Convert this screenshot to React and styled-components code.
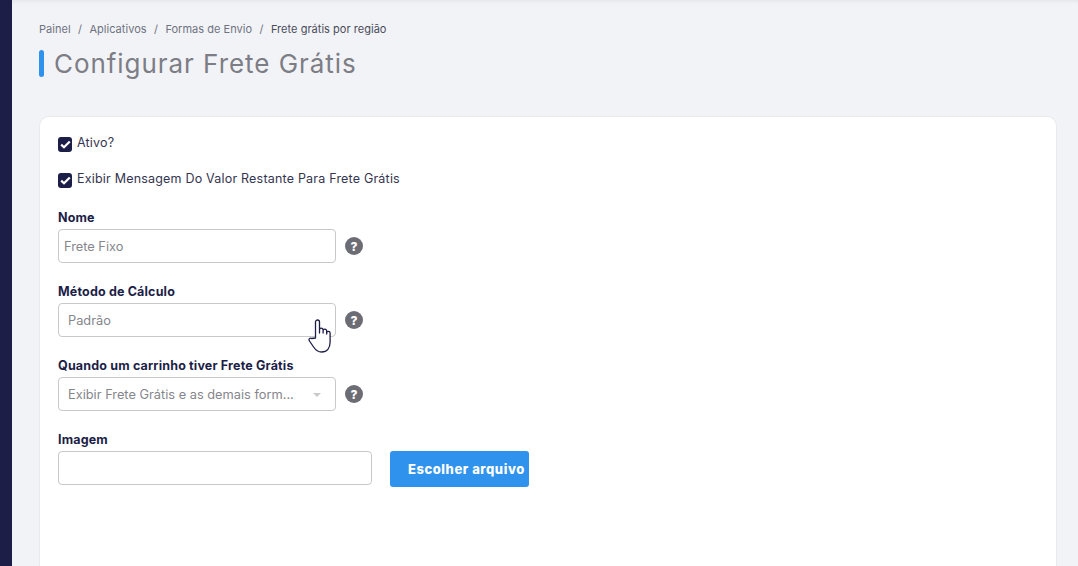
import React from 'react';
import styled, { createGlobalStyle } from 'styled-components';

const GlobalStyle = createGlobalStyle`
  html, body {
    margin: 0;
    height: 100%;
    overflow: hidden;
    background: #f2f3f7;
    font-family: "Inter", "Liberation Sans", sans-serif;
  }
  * { box-sizing: border-box; }
`;

const Page = styled.div`
  display: flex;
  height: 566px;
  overflow: hidden;
`;

const Sidebar = styled.aside`
  flex: 0 0 12px;
  background: #1c1e47;
`;

const Main = styled.main`
  flex: 1;
  min-width: 0;
  padding: 21px 21px 0 27px;
  box-shadow: inset 0 4px 4px -3px rgba(0, 0, 0, 0.07);
`;

const Breadcrumb = styled.nav`
  display: flex;
  align-items: center;
  height: 16px;
  font-size: 11px;
  letter-spacing: 0.03px;
  color: #6f7280;
`;

const Crumb = styled.span`
  color: ${({ $current }) => ($current ? '#4a4c5a' : '#6f7280')};
`;

const Slash = styled.span`
  margin: 0 7.4px;
`;

const TitleRow = styled.div`
  display: flex;
  align-items: center;
  gap: 10px;
  margin-top: 8px;
  height: 36px;
`;

const TitleBar = styled.span`
  width: 5px;
  height: 27px;
  border-radius: 3px;
  background: #2f93ee;
`;

const Title = styled.h1`
  margin: 0;
  font-size: 26px;
  font-weight: 400;
  letter-spacing: 0.95px;
  color: #7c7d85;
`;

const Card = styled.section`
  margin-top: 35px;
  height: 470px;
  padding: 17px 18px;
  background: #fff;
  border: 1px solid #e9eaee;
  border-radius: 10px;
`;

const CheckRow = styled.label`
  display: flex;
  align-items: flex-start;
  gap: 5px;
  height: 20px;
  margin-bottom: 16px;
  font-size: 12.5px;
  letter-spacing: 0.2px;
  line-height: 18px;
  color: #34354f;
`;

const CheckBox = styled.span`
  display: flex;
  align-items: center;
  justify-content: center;
  flex: 0 0 14px;
  height: 15px;
  margin-top: 3px;
  border-radius: 3px;
  background: #1c1e47;
`;

const Fields = styled.div`
  padding-top: 3px;
`;

const Field = styled.div`
  margin-bottom: 20px;
`;

const Label = styled.div`
  height: 17px;
  font-size: 12.5px;
  letter-spacing: 0.17px;
  line-height: 17px;
  font-weight: 700;
  color: #1c1e47;
`;

const FieldRow = styled.div`
  display: flex;
  align-items: ${({ $top }) => ($top ? 'flex-start' : 'center')};
  gap: ${({ $gap }) => $gap || 9}px;
  margin-top: 3px;
`;

const InputBox = styled.div`
  position: relative;
  display: flex;
  align-items: center;
  width: ${({ $width }) => $width || 278}px;
  height: 34px;
  padding-left: ${({ $pad }) => $pad || 9}px;
  border: 1px solid #c9c9cc;
  border-radius: 4px;
  background: #fff;
  font-size: 12.8px;
  color: #85868c;
`;

const Caret = styled.span`
  position: absolute;
  right: 14px;
  top: 15px;
  border-left: 4px solid transparent;
  border-right: 4px solid transparent;
  border-top: 4px solid #c9c9cc;
`;

const Help = styled.span`
  display: flex;
  align-items: center;
  justify-content: center;
  width: 18px;
  height: 18px;
  border-radius: 50%;
  background: #6c6c74;
  color: #fff;
  font-size: 12px;
  font-weight: 800;
`;

const FileButton = styled.button`
  height: 36px;
  width: 139px;
  padding: 0 0 0 18px;
  border: 0;
  border-radius: 3px;
  background: #2f93ee;
  color: #fff;
  font-family: inherit;
  font-size: 13px;
  font-weight: 800;
  letter-spacing: 0.55px;
  text-align: left;
  white-space: nowrap;
`;

const CursorIcon = styled.svg`
  position: absolute;
  left: 306px;
  top: 318px;
  width: 29px;
  height: 36px;
`;

function Check() {
  return (
    <svg width="11" height="9" viewBox="0 0 11 9" fill="none">
      <path d="M1.2 4.6 4 7.3 9.8 1.5" stroke="#fff" strokeWidth="2.2" />
    </svg>
  );
}

function HandCursor() {
  return (
    <CursorIcon viewBox="0 0 28 36" fill="#fff" stroke="#1c1e47" strokeWidth="1.3" strokeLinejoin="round" strokeLinecap="round">
      <path d="M9 20V4a2 2 0 0 1 4 0v11l0-3a1.800 1.800 0 0 1 3.600 0v3-2a1.800 1.800 0 0 1 3.600 0v3-1a1.700 1.700 0 0 1 3.400 0v9c0 6-3 10-8.500 10-4 0-6-2-8-5L3 23c-1.500-2 .5-3.500 2-2.500z" />
    </CursorIcon>
  );
}

function FormField({ label, value, pad, caret, help = true }) {
  return (
    <Field>
      <Label>{label}</Label>
      <FieldRow>
        <InputBox $pad={pad}>
          {value}
          {caret && <Caret />}
        </InputBox>
        {help && <Help>?</Help>}
      </FieldRow>
    </Field>
  );
}

export default function App() {
  return (
    <Page>
      <GlobalStyle />
      <Sidebar />
      <Main>
        <Breadcrumb>
          <Crumb>Painel</Crumb>
          <Slash>/</Slash>
          <Crumb>Aplicativos</Crumb>
          <Slash>/</Slash>
          <Crumb>Formas de Envio</Crumb>
          <Slash>/</Slash>
          <Crumb $current>Frete grátis por região</Crumb>
        </Breadcrumb>
        <TitleRow>
          <TitleBar />
          <Title>Configurar Frete Grátis</Title>
        </TitleRow>
        <Card>
          <CheckRow>
            <CheckBox><Check /></CheckBox>
            Ativo?
          </CheckRow>
          <CheckRow>
            <CheckBox><Check /></CheckBox>
            Exibir Mensagem Do Valor Restante Para Frete Grátis
          </CheckRow>
          <Fields>
            <FormField label="Nome" value="Frete Fixo" pad={5} />
            <FormField label="Método de Cálculo" value="Padrão" />
            <FormField label="Quando um carrinho tiver Frete Grátis" value="Exibir Frete Grátis e as demais form..." caret />
            <Field>
              <Label>Imagem</Label>
              <FieldRow $gap={18} $top>
                <InputBox $width={314} />
                <FileButton>Escolher arquivo</FileButton>
              </FieldRow>
            </Field>
          </Fields>
        </Card>
      </Main>
      <HandCursor />
    </Page>
  );
}
